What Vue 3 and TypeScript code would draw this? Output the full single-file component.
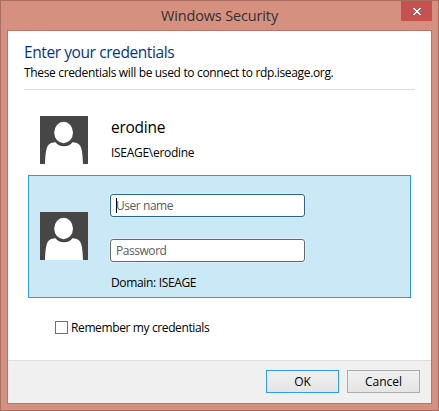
<script setup lang="ts">
import { ref } from 'vue'

const account = { name: 'erodine', domain: 'ISEAGE' }
const userName = ref('')
const password = ref('')
const remember = ref(false)
</script>

<template>
  <div class="window">
    <header class="titlebar">
      <span class="title">Windows Security</span>
      <button class="close" aria-label="Close">
        <svg width="8" height="7" viewBox="0 0 8 7">
          <path d="M0 0h2v1h1v1h2V1h1V0h2v1H7v1H6v1H5v1h1v1h1v1h1v1H6V6H5V5H3v1H2v1H0V6h1V5h1V4h1V3H2V2H1V1H0z" fill="#fff" shape-rendering="crispEdges" />
        </svg>
      </button>
    </header>
    <main class="client">
      <div class="heading">
        <h1>Enter your credentials</h1>
        <p>These credentials will be used to connect to rdp.iseage.org.</p>
      </div>
      <section class="tile">
        <svg class="avatar" viewBox="0 0 48 48">
          <rect width="48" height="48" fill="#464646" />
          <path d="M5 48C5.400 38 6 32.500 8 29.500c1.600-2.300 4.500-3.200 7.500-3.200C17.500 28.800 20 30.300 24 30.300s6.500-1.500 8.500-4c3 0 5.900.9 7.500 3.200 2 3 2.600 8.500 3 18.500z" fill="#fff" />
          <ellipse cx="23.600" cy="16.500" rx="9.400" ry="10.700" fill="#fff" />
        </svg>
        <div class="info">
          <div class="name">{{ account.name }}</div>
          <div class="account">{{ account.domain }}\{{ account.name }}</div>
        </div>
      </section>
      <section class="tile selected">
        <svg class="avatar" viewBox="0 0 48 48">
          <rect width="48" height="48" fill="#464646" />
          <path d="M5 48C5.400 38 6 32.500 8 29.500c1.600-2.300 4.500-3.200 7.500-3.200C17.500 28.800 20 30.300 24 30.300s6.500-1.500 8.500-4c3 0 5.900.9 7.500 3.200 2 3 2.600 8.500 3 18.500z" fill="#fff" />
          <ellipse cx="23.600" cy="16.500" rx="9.400" ry="10.700" fill="#fff" />
        </svg>
        <div class="fields">
          <label class="field focused">
            <i class="caret"></i>
            <input v-model="userName" type="text" placeholder="User name" />
          </label>
          <label class="field">
            <input v-model="password" type="password" placeholder="Password" />
          </label>
          <div class="domain">Domain: {{ account.domain }}</div>
        </div>
      </section>
      <label class="remember">
        <input v-model="remember" type="checkbox" />
        <span>Remember my credentials</span>
      </label>
      <footer class="actions">
        <button class="btn primary">OK</button>
        <button class="btn">Cancel</button>
      </footer>
    </main>
  </div>
</template>

<style>
body {
  margin: 0;
  overflow: hidden;
}
</style>

<style scoped>
* {
  box-sizing: border-box;
}
.window {
  width: 439px;
  height: 411px;
  border: 1px solid #a96d62;
  background: #d59080;
  padding: 0 6px 6px;
  display: flex;
  flex-direction: column;
  font-family: 'Open Sans', 'Noto Sans', sans-serif;
  font-size: 12px;
  letter-spacing: -0.34px;
  color: #000;
  white-space: nowrap;
}
.titlebar {
  height: 29px;
  flex: none;
  display: grid;
  grid-template-columns: 1fr 31px;
  align-items: start;
}
.title {
  padding-left: 154px;
  font-size: 14.5px;
  line-height: 29px;
  letter-spacing: -0.15px;
  color: #33302f;
}
.close {
  width: 31px;
  height: 20px;
  padding: 1px 0 0;
  border: 0;
  background: #c75050;
  display: flex;
  align-items: center;
  justify-content: center;
}
.client {
  flex: 1;
  border: 1px solid #b8766a;
  background: #fff;
  display: flex;
  flex-direction: column;
}
.heading {
  margin: 0 16px;
  height: 59px;
  flex: none;
  padding-top: 10px;
  border-bottom: 1px solid #dfdfdf;
}
h1 {
  margin: 0;
  font-size: 15.5px;
  line-height: 23px;
  font-weight: 400;
  letter-spacing: -0.41px;
  color: #003399;
}
p {
  margin: 0;
  line-height: 17px;
}
.tile {
  display: flex;
  margin: 0 20px;
  flex: none;
  gap: 23px;
  height: 85px;
  padding: 26px 0 0 12px;
}
.avatar {
  width: 48px;
  height: 48px;
  flex: none;
}
.name {
  font-size: 15.5px;
  line-height: 22px;
  letter-spacing: -0.25px;
}
.account {
  line-height: 16px;
  margin-top: 7px;
  letter-spacing: -0.29px;
}
.selected {
  height: 123px;
  padding: 18px 0 0 11px;
  gap: 22px;
  border: 1px solid #26a0da;
  background: #cbe8f6;
}
.selected .avatar {
  margin-top: 18px;
}
.fields {
  display: flex;
  flex-direction: column;
  width: 195px;
}
.field {
  display: flex;
  align-items: center;
  height: 23px;
  padding: 0 5px;
  margin-bottom: 22px;
  border: 1px solid #686868;
  border-radius: 3px;
  background: #fff;
  box-shadow: 0 0 0 1px #dceffa;
}
.focused {
  border-color: #2a6496;
}
.field input {
  flex: 1;
  min-width: 0;
  border: 0;
  padding: 0;
  outline: 0;
  background: transparent;
  font-family: inherit;
  font-size: 12px;
  letter-spacing: -0.45px;
}
.field input::placeholder {
  color: #5c5c5c;
  opacity: 1;
}
.caret {
  width: 1px;
  height: 15px;
  background: #000;
  margin-right: -1px;
}
.domain {
  padding-left: 1px;
  margin-top: -9px;
  line-height: 16px;
}
.remember {
  display: flex;
  align-items: center;
  gap: 3px;
  margin: 21px 0 0 47px;
  height: 17px;
  letter-spacing: -0.38px;
}
.remember input {
  appearance: none;
  width: 13px;
  height: 13px;
  margin: 0;
  border: 1px solid #707070;
  background: #fff;
}
.actions {
  margin-top: auto;
  height: 43px;
  border-top: 1px solid #dfdfdf;
  background: #f0f0f0;
  display: flex;
  justify-content: flex-end;
  gap: 8px;
  padding: 9px 11px 0;
}
.btn {
  width: 73px;
  height: 23px;
  padding: 0;
  border: 1px solid #acacac;
  background: linear-gradient(#f0f0f0, #e5e5e5);
  font-family: inherit;
  font-size: 12px;
  line-height: 21px;
  color: #000;
}
.primary {
  border-color: #3399ff;
}
</style>
